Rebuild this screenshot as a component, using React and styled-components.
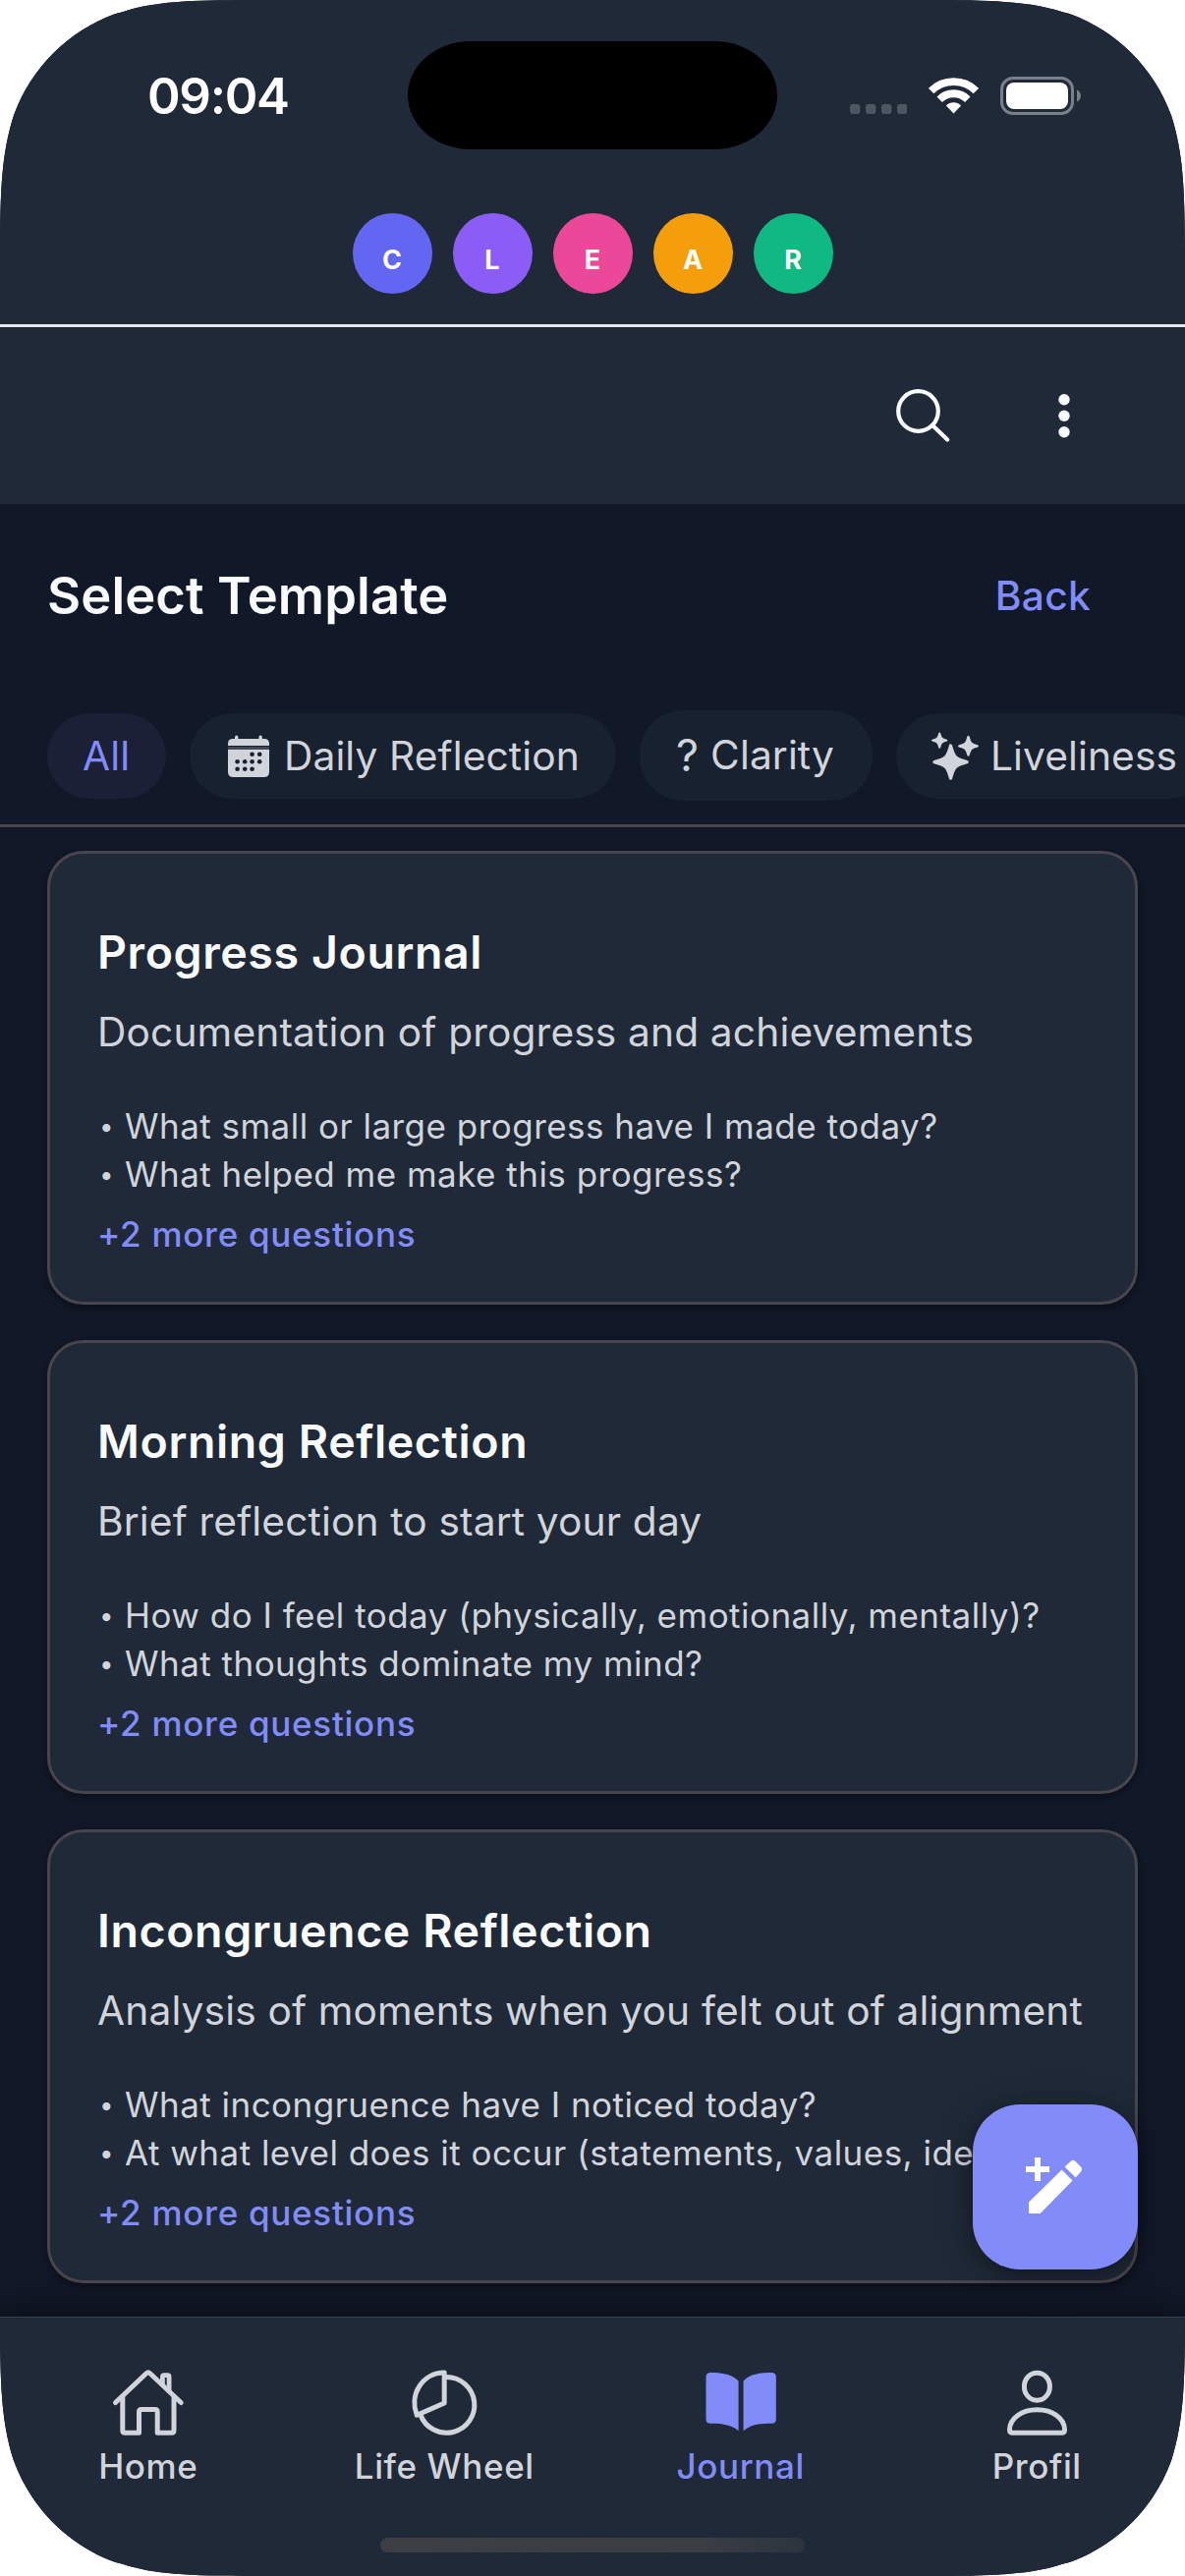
import React from "react";
import styled, { createGlobalStyle } from "styled-components";

const color = {
  page: "#111827",
  surface: "#1f2937",
  outline: "#49454f",
  text: "#f9fafb",
  muted: "#d1d5db",
  accent: "#818cf8",
};

const GlobalStyle = createGlobalStyle`
  body {
    margin: 0;
    background: #fff;
    font-family: Inter, "Liberation Sans", sans-serif;
  }
  * { box-sizing: border-box; }
`;

/* Continuous-curvature corner outline for the device screen */
const screenOutline = (w, h, r) => {
  const a = 1.52866 * r, b = 1.08849 * r, c = 0.86841 * r, d = 0.66993 * r;
  const e = 0.0655 * r, f = 0.63149 * r, g = 0.07491 * r, i = 0.37282 * r, j = 0.16906 * r;
  return [
    `M${a} 0 L${w - a} 0`,
    `C${w - b} 0 ${w - c} 0 ${w - d} ${e} L${w - f} ${g}`,
    `C${w - i} ${j} ${w - j} ${i} ${w - g} ${f} C${w} ${c} ${w} ${b} ${w} ${a}`,
    `L${w} ${h - a} C${w} ${h - b} ${w} ${h - c} ${w - g} ${h - f}`,
    `C${w - j} ${h - i} ${w - i} ${h - j} ${w - f} ${h - g} L${w - d} ${h - e}`,
    `C${w - c} ${h} ${w - b} ${h} ${w - a} ${h} L${a} ${h}`,
    `C${b} ${h} ${c} ${h} ${d} ${h - e} L${f} ${h - g}`,
    `C${i} ${h - j} ${j} ${h - i} ${g} ${h - f} C0 ${h - c} 0 ${h - b} 0 ${h - a}`,
    `L0 ${a} C0 ${b} 0 ${c} ${g} ${f}`,
    `C${j} ${i} ${i} ${j} ${f} ${g} L${d} ${e} C${c} 0 ${b} 0 ${a} 0 Z`,
  ].join(" ");
};

const Screen = styled.div`
  position: relative;
  display: flex;
  flex-direction: column;
  width: 1206px;
  height: 2622px;
  overflow: hidden;
  background: ${color.page};
  clip-path: path("${screenOutline(1206, 2622, 186)}");
`;

const Header = styled.header`
  display: flex;
  flex-direction: column;
  flex: none;
  height: 333px;
  background: ${color.surface};
  border-bottom: 3px solid #e5e7eb;
`;

const StatusBar = styled.div`
  display: grid;
  grid-template-columns: 415px 376px 415px;
  align-items: center;
  height: 110px;
  margin-top: 42px;
`;

const Clock = styled.time`
  padding: 1px 0 0 150px;
  color: #fff;
  font-size: 51px;
  font-weight: 600;
  line-height: 62px;
  letter-spacing: -1.3px;
`;

const Island = styled.div`
  height: 110px;
  border-radius: 64px / 55px;
  background: #000;
`;

const StatusIcons = styled.div`
  display: flex;
  align-items: center;
  gap: 22px;
  padding-left: 74px;
`;

const Badges = styled.div`
  display: flex;
  justify-content: center;
  gap: 21px;
  margin-top: 65px;
`;

const Badge = styled.span`
  display: flex;
  align-items: center;
  justify-content: center;
  width: 81px;
  height: 82px;
  padding-top: 14px;
  border-radius: 50%;
  background: ${(p) => p.$tone};
  color: #fff;
  font-size: 27px;
  font-weight: 700;
  line-height: 34px;
`;

const AppBar = styled.div`
  display: flex;
  flex: none;
  align-items: center;
  justify-content: flex-end;
  gap: 72px;
  height: 180px;
  padding-right: 87px;
  background: ${color.surface};
`;

const IconButton = styled.button`
  display: flex;
  padding: 0;
  border: 0;
  background: none;
  color: ${color.text};
`;

const TitleRow = styled.div`
  display: flex;
  flex: none;
  align-items: center;
  justify-content: space-between;
  height: 186px;
  padding: 0 96px 0 48px;
`;

const Title = styled.h1`
  margin: 0;
  color: ${color.text};
  font-size: 52.5px;
  font-weight: 600;
  line-height: 64px;
  letter-spacing: 0.1px;
`;

const BackButton = styled.button`
  padding: 2px 0 0;
  border: 0;
  background: none;
  color: ${color.accent};
  font: 500 40.7px/60px Inter, sans-serif;
  letter-spacing: 0.3px;
`;

const Chips = styled.div`
  display: flex;
  flex: none;
  align-items: center;
  gap: 24px;
  height: 143px;
  padding-left: 48px;
  overflow: hidden;
  border-bottom: 3px solid ${color.outline};
`;

const Chip = styled.button`
  display: flex;
  flex: none;
  align-items: center;
  gap: ${(p) => p.$gap || 14}px;
  width: ${(p) => p.$width}px;
  height: ${(p) => (p.$tall ? 92 : 87)}px;
  padding: ${(p) => (p.$tall ? 0 : 1)}px 0 0 ${(p) => p.$inset}px;
  border: 0;
  border-radius: 44px;
  background: ${(p) => (p.$active ? "#1c2036" : "#18212f")};
  color: ${(p) => (p.$active ? color.accent : color.muted)};
  font: 400 40.7px/60px Inter, sans-serif;
  letter-spacing: 0.1px;
  white-space: nowrap;
`;

const QuestionMark = styled.span`
  font-size: 45px;
`;

const List = styled.main`
  display: flex;
  flex: 1;
  flex-direction: column;
  gap: 36px;
  min-height: 0;
  padding: 24px 48px 0;
  overflow: hidden;
`;

const Card = styled.article`
  flex: none;
  height: 462px;
  padding: 64px 48px 0;
  border: 3px solid ${color.outline};
  border-radius: 37px;
  background: ${color.surface};
  box-shadow: 0 3px 9px rgba(0, 0, 0, 0.4);
  white-space: nowrap;
`;

const CardTitle = styled.h2`
  margin: 0;
  color: ${color.text};
  font-size: 46.5px;
  font-weight: 600;
  line-height: 72px;
  letter-spacing: 0.6px;
`;

const CardText = styled.p`
  margin: 16px 0 41px;
  color: ${color.muted};
  font-size: 40.7px;
  line-height: 60px;
  letter-spacing: 0.14px;
`;

const Questions = styled.ul`
  margin: 0;
  padding: 0;
  list-style: none;
`;

const Question = styled.li`
  display: flex;
  color: ${color.muted};
  font-size: 35px;
  line-height: 49px;
  letter-spacing: 0.48px;

  &::before {
    content: "•";
    width: 25px;
    margin-left: 3px;
    text-indent: -1px;
    font-size: 26px;
  }
`;

const More = styled.p`
  margin: 12px 0 0;
  color: ${color.accent};
  font-size: 35px;
  font-weight: 500;
  line-height: 48px;
  letter-spacing: 0.72px;
`;

const Fab = styled.button`
  position: absolute;
  right: 48px;
  bottom: 312px;
  display: flex;
  align-items: center;
  justify-content: center;
  width: 168px;
  height: 168px;
  padding: 0;
  border: 0;
  border-radius: 48px;
  background: ${color.accent};
  color: #fff;
  box-shadow: 0 6px 18px rgba(0, 0, 0, 0.3), 0 3px 42px rgba(0, 0, 0, 0.18);
`;

const BottomBar = styled.footer`
  display: flex;
  flex: none;
  flex-direction: column;
  align-items: center;
  height: 264px;
  border-top: 1px solid #374151;
  background: ${color.surface};
  box-shadow: 0 -6px 30px rgba(0, 0, 0, 0.4);
`;

const Tabs = styled.nav`
  display: grid;
  grid-template-columns: repeat(4, 1fr);
  width: 100%;
  padding-top: 45px;
`;

const Tab = styled.a`
  display: flex;
  flex-direction: column;
  align-items: center;
  color: ${(p) => (p.$active ? color.accent : color.muted)};
  font-size: 35px;
  font-weight: 500;
  line-height: 44px;
  letter-spacing: 0.6px;
`;

const HomeIndicator = styled.div`
  width: 432px;
  height: 15px;
  margin-top: 51px;
  border-radius: 8px;
  background: linear-gradient(90deg, #3d3f43 0%, #3b3e43 75%, #2c343f 100%);
`;

const line = {
  fill: "none",
  stroke: "currentColor",
  strokeWidth: 5,
  strokeLinecap: "round",
  strokeLinejoin: "round",
};

const SignalDots = () => (
  <svg width="58" height="38" viewBox="0 0 58 38" fill="#4d5661">
    {[0, 16, 32, 48].map((x) => <rect key={x} x={x} y="28" width="10.4" height="10" rx="3" />)}
  </svg>
);

const Wifi = () => (
  <svg width="51" height="38" viewBox="0 0 51 38" fill="none" stroke="#fff" strokeWidth="7.8">
    <path d="M2.6 14.6A32.4 32.4 0 0 1 48.4 14.6" />
    <path d="M11.2 23.2A20.2 20.2 0 0 1 39.8 23.2" />
    <path d="M25.5 37.5L17.9 29.6Q21.2 26.3 25.5 26.3T33.1 29.6Z" fill="#fff" stroke="none" />
  </svg>
);

const Battery = () => (
  <svg width="82" height="39" viewBox="0 0 82 39">
    <rect x="1.5" y="1.5" width="72" height="36" rx="11.5" fill="none" stroke="#79808a" strokeWidth="3" />
    <rect x="6" y="6" width="63" height="27" rx="8" fill="#fff" />
    <path d="M78 13.5C83.3 15.5 83.3 23.5 78 25.5Z" fill="#79808a" />
  </svg>
);

const SearchIcon = () => (
  <svg width="72" height="72" viewBox="0 0 72 72" {...line} strokeWidth="4.2">
    <circle cx="31.5" cy="31.5" r="20.3" />
    <path d="M46.6 46.4L61.2 60.6" />
  </svg>
);

const MenuDots = () => (
  <svg width="72" height="72" viewBox="0 0 72 72" fill="currentColor">
    <circle cx="36" cy="19.7" r="5.7" />
    <circle cx="36" cy="36.3" r="5.7" />
    <circle cx="36" cy="52.7" r="5.7" />
  </svg>
);

const CalendarIcon = () => (
  <svg width="44" height="44" viewBox="0 0 44 44" fill="currentColor">
    <path d="M1 11V9Q1 4 6 4H8V2.3A1.6 1.6 0 0 1 11.4 2.3V4H32.4V2.3A1.6 1.6 0 0 1 35.8 2.3V4H38Q43 4 43 9V11Z" />
    <path d="M1 12.6H43V13.4H1Z" opacity=".45" />
    <path d="M1 14.8H43V37.5Q43 43 37.5 43H6.5Q1 43 1 37.5Z" />
    <g fill="#18212f">
      {[[25.6, 19.7], [33.2, 19.7], [10.6, 27.2], [18.2, 27.2], [25.6, 27.2], [33.2, 27.2], [10.6, 34.8], [18.2, 34.8], [25.6, 34.8]].map(
        ([x, y]) => <circle key={`${x}-${y}`} cx={x} cy={y} r="2.3" />
      )}
    </g>
  </svg>
);

const star = (x, y, r) => {
  const k = r * 0.3;
  return `M${x} ${y - r}Q${x + k * 0.5} ${y - k * 1.5} ${x + k} ${y - k}Q${x + k * 1.5} ${y - k * 0.5} ${x + r} ${y}Q${x + k * 1.5} ${y + k * 0.5} ${x + k} ${y + k}Q${x + k * 0.5} ${y + k * 1.5} ${x} ${y + r}Q${x - k * 0.5} ${y + k * 1.5} ${x - k} ${y + k}Q${x - k * 1.5} ${y + k * 0.5} ${x - r} ${y}Q${x - k * 1.5} ${y - k * 0.5} ${x - k} ${y - k}Q${x - k * 0.5} ${y - k * 1.5} ${x} ${y - r}Z`;
};

const SparklesIcon = () => (
  <svg width="50" height="58" viewBox="0 -4 50 58" fill="currentColor" stroke="currentColor" strokeLinejoin="round">
    <path d={star(20.5, 30.6, 16.5)} strokeWidth="3.4" />
    <path d={star(9.2, 8.6, 7.2)} strokeWidth="2" />
    <path d={star(38.5, 14.3, 9.2)} strokeWidth="2.4" />
  </svg>
);

const ComposeIcon = () => (
  <svg width="72" height="72" viewBox="0 0 24 24" fill="currentColor">
    <path d="M5 2H7V5H10V7H7V10H5V7H2V5H5Z" />
    <path d="M14.2 6.15L3 17.15V21H6.9L17.85 9.8Z" />
    <path d="M15.2 5.2L17.25 3.25Q18 2.6 18.75 3.25L20.75 5.25Q21.35 6 20.75 6.75L18.9 8.85Z" />
  </svg>
);

const TabIcon = ({ children, ...rest }) => (
  <svg width="84" height="84" viewBox="0 0 84 84" {...line} {...rest}>{children}</svg>
);

const tabs = [
  {
    label: "Home",
    icon: (
      <TabIcon>
        <path d="M8.5 41.5L39.9 11.8Q41.8 10 43.7 11.8L75.2 41.5" />
        <path d="M56.4 23V15.5Q56.4 13.7 58 13.7H61.5Q63.1 13.7 63.1 15.5V30" strokeWidth="4.8" />
        <path d="M15.8 35.5V70Q15.8 72.3 18.2 72.3H32.5V51.2Q32.5 48.6 35 48.6H48.8Q51.2 48.6 51.2 51.2V72.3H65.6Q68 72.3 68 70V35.5" />
      </TabIcon>
    ),
  },
  {
    label: "Life Wheel",
    icon: (
      <TabIcon>
        <path d="M42.2 11V42L14.2 54.2C10.7 45 11 34 16.3 25.6C21.8 16.4 31.5 11 42.2 11Z" />
        <path d="M44.3 15.5A28.4 28.4 0 1 1 17.9 54" />
      </TabIcon>
    ),
  },
  {
    label: "Journal",
    active: true,
    icon: (
      <TabIcon fill="currentColor" stroke="none">
        <path d="M39.6 19.5C34 13.6 25.5 11 11 11Q6.5 11 6.5 15.5V58.2Q6.5 62.7 11 62.7C25 62.7 33 64.5 39.6 70.3Z" />
        <path d="M44.6 19.5C50 13.6 58.5 11 73.3 11Q77.8 11 77.8 15.5V58.2Q77.8 62.7 73.3 62.7C59 62.7 51 64.5 44.6 70.3Z" />
      </TabIcon>
    ),
  },
  {
    label: "Profil",
    icon: (
      <TabIcon>
        <ellipse cx="42.4" cy="25.2" rx="13" ry="14" />
        <path d="M14.5 69C14.5 58 26.5 48.8 42.5 48.8S70.5 58 70.5 69Q70.5 72.3 67.5 72.3H17.5Q14.5 72.3 14.5 69Z" />
      </TabIcon>
    ),
  },
];

const badges = [
  ["C", "#6366f1"],
  ["L", "#8b5cf6"],
  ["E", "#ec4899"],
  ["A", "#f59e0b"],
  ["R", "#10b981"],
];

const templates = [
  {
    title: "Progress Journal",
    text: "Documentation of progress and achievements",
    questions: ["What small or large progress have I made today?", "What helped me make this progress?"],
  },
  {
    title: "Morning Reflection",
    text: "Brief reflection to start your day",
    questions: ["How do I feel today (physically, emotionally, mentally)?", "What thoughts dominate my mind?"],
  },
  {
    title: "Incongruence Reflection",
    text: "Analysis of moments when you felt out of alignment",
    questions: ["What incongruence have I noticed today?", "At what level does it occur (statements, values, identity)?"],
  },
];

export default function App() {
  return (
    <>
      <GlobalStyle />
      <Screen>
        <Header>
          <StatusBar>
            <Clock>09:04</Clock>
            <Island />
            <StatusIcons>
              <SignalDots />
              <Wifi />
              <Battery />
            </StatusIcons>
          </StatusBar>
          <Badges>
            {badges.map(([letter, tone]) => <Badge key={letter} $tone={tone}>{letter}</Badge>)}
          </Badges>
        </Header>
        <AppBar>
          <IconButton aria-label="Search"><SearchIcon /></IconButton>
          <IconButton aria-label="More"><MenuDots /></IconButton>
        </AppBar>
        <TitleRow>
          <Title>Select Template</Title>
          <BackButton>Back</BackButton>
        </TitleRow>
        <Chips>
          <Chip $active $width={121} $inset={36}>All</Chip>
          <Chip $width={434} $inset={38}><CalendarIcon />Daily Reflection</Chip>
          <Chip $tall $width={237} $inset={37} $gap={12}>
            <QuestionMark>?</QuestionMark>Clarity
          </Chip>
          <Chip $width={320} $inset={35} $gap={11}><SparklesIcon />Liveliness</Chip>
        </Chips>
        <List>
          {templates.map((t) => (
            <Card key={t.title}>
              <CardTitle>{t.title}</CardTitle>
              <CardText>{t.text}</CardText>
              <Questions>
                {t.questions.map((q) => <Question key={q}>{q}</Question>)}
              </Questions>
              <More>+2 more questions</More>
            </Card>
          ))}
        </List>
        <BottomBar>
          <Tabs>
            {tabs.map((t) => (
              <Tab key={t.label} $active={t.active}>
                {t.icon}
                {t.label}
              </Tab>
            ))}
          </Tabs>
          <HomeIndicator />
        </BottomBar>
        <Fab aria-label="New entry"><ComposeIcon /></Fab>
      </Screen>
    </>
  );
}
